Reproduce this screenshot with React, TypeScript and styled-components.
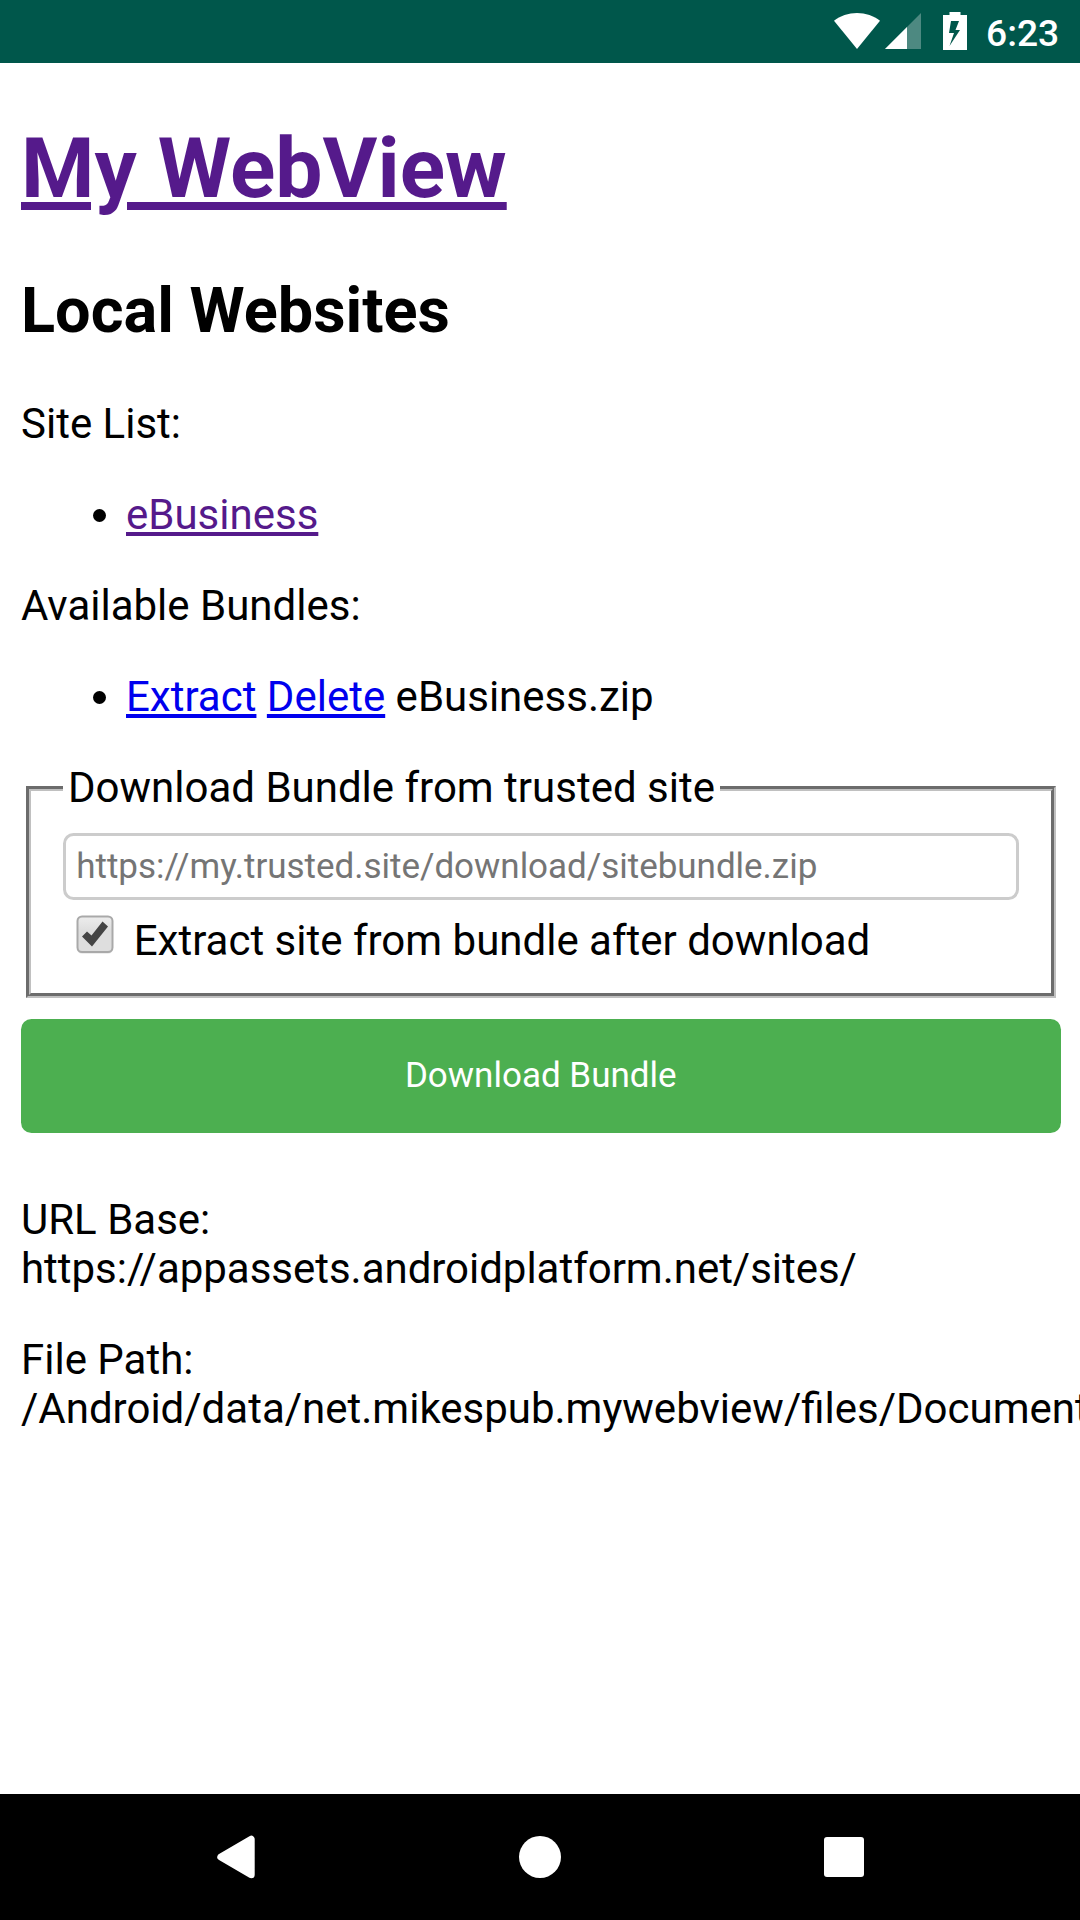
import React from "react";
import styled, { createGlobalStyle } from "styled-components";

const GlobalStyle = createGlobalStyle`
  html, body { margin: 0; padding: 0; }
  body {
    background: #fff;
    color: #000;
    font-family: Roboto, sans-serif;
    overflow: hidden;
  }
`;

const Screen = styled.div`
  display: flex;
  flex-direction: column;
  width: 1080px;
  height: 1920px;
  overflow: hidden;
  background: #fff;
`;

const StatusBar = styled.header`
  box-sizing: border-box;
  flex: none;
  display: flex;
  justify-content: flex-end;
  align-items: center;
  height: 63px;
  padding-right: 21px;
  background: #00574b;
`;

const StatusIcons = styled.svg`
  display: block;
  width: 140px;
  height: 63px;
  margin-right: 15px;
`;

const Clock = styled.span`
  width: 73px;
  color: #fff;
  font-size: 37.2px;
  font-weight: 500;
  line-height: 44px;
  padding-top: 2px;
`;

const WebPage = styled.main`
  box-sizing: border-box;
  flex: 1;
  display: flex;
  flex-direction: column;
  width: 1081.5px;
  padding: 57.28px 21px 0;
  font-size: 42px;
  line-height: 49px;
`;

const Title = styled.h1`
  margin: 0 0 55.28px;
  font-size: 84px;
  line-height: 98px;
  font-weight: 700;
`;

const Heading = styled.h2`
  margin: 0 0 51.3px;
  font-size: 63px;
  line-height: 74px;
  font-weight: 700;
`;

const Link = styled.a<{ $visited?: boolean; $large?: boolean }>`
  color: ${(p) => (p.$visited ? "#551a8b" : "#0000ee")};
  text-decoration: underline;
  text-decoration-thickness: ${(p) => (p.$large ? 8 : 4)}px;
  text-underline-offset: ${(p) => (p.$large ? 5 : 3)}px;
`;

const Paragraph = styled.p`
  margin: 0 0 42px;
  white-space: nowrap;
`;

const Url = styled.span`
  letter-spacing: -0.025px;
`;

const SiteList = styled.ul<{ $last?: boolean }>`
  margin: 0 0 ${(p) => (p.$last ? 43 : 42)}px;
  padding: 0 0 0 105px;
`;

const BundleFieldset = styled.fieldset`
  box-sizing: border-box;
  height: 234px;
  margin: 0 4.5px 21px 5.25px;
  padding: 14.7px 32.25px 0 31.5px;
  border: 5px groove #c0c0c0;
`;

const Legend = styled.legend`
  padding: 0 5.25px 2px;
  line-height: 47px;
`;

const UrlInput = styled.input`
  box-sizing: border-box;
  display: block;
  width: 100%;
  height: 67px;
  margin: 5px 0 0;
  padding: 0 10.5px;
  border: 3px solid #ccc;
  border-radius: 10.5px;
  background: #fff;
  font: 35px Roboto, sans-serif;
  letter-spacing: -0.025px;
  outline: none;
  &::placeholder { color: #757575; opacity: 1; }
`;

const CheckRow = styled.label`
  display: flex;
  align-items: flex-start;
  padding: 16px 0 0 13px;
`;

const CheckIcon = styled.svg`
  flex: none;
  width: 38px;
  height: 40px;
  margin: -1px 20px 0 0;
`;

const DownloadButton = styled.button`
  flex: none;
  height: 114px;
  margin: 0 0 62px;
  padding: 0;
  border: 0;
  border-radius: 10.5px;
  background: #4caf50;
  color: #fff;
  font: 35px Roboto, sans-serif;
`;

const NavBar = styled.nav`
  flex: none;
  display: flex;
  justify-content: center;
  align-items: center;
  height: 126px;
  background: #000;
`;

const NavButton = styled.button`
  display: flex;
  align-items: center;
  justify-content: center;
  width: 304px;
  height: 126px;
  padding: 0;
  border: 0;
  background: none;
`;

const NavIcon = styled.svg`
  width: 60px;
  height: 60px;
  fill: #fff;
`;

export default function App() {
  return (
    <Screen>
      <GlobalStyle />
      <StatusBar>
        <StatusIcons viewBox="831 0 140 63" fill="#fff">
          <path d="M834 20.8C840 16 848.5 13 857 13C865.500 13 874 16 880 20.800L857 49Z" />
          <path d="M921 13V49H885Z" opacity=".3" />
          <path d="M907 27V49H885Z" />
          <path fillRule="evenodd" d="M949.500 12H960.500V15H967V50H943V15H949.500ZM951 21L949 33H954L949.500 46L960 30H955.500L959 21Z" />
        </StatusIcons>
        <Clock>6:23</Clock>
      </StatusBar>
      <WebPage>
        <Title><Link $visited $large>My WebView</Link></Title>
        <Heading>Local Websites</Heading>
        <Paragraph>Site List:</Paragraph>
        <SiteList>
          <li><Link $visited>eBusiness</Link></li>
        </SiteList>
        <Paragraph>Available Bundles:</Paragraph>
        <SiteList $last>
          <li><Link>Extract</Link> <Link>Delete</Link> eBusiness.zip</li>
        </SiteList>
        <BundleFieldset>
          <Legend>Download Bundle from trusted site</Legend>
          <UrlInput placeholder="https://my.trusted.site/download/sitebundle.zip" />
          <CheckRow>
            <CheckIcon viewBox="0 0 38 40">
              <defs>
                <linearGradient id="boxFill" x1="0" y1="0" x2="0" y2="1">
                  <stop offset="0" stopColor="#ededed" />
                  <stop offset=".4" stopColor="#dedede" />
                  <stop offset="1" stopColor="#dedede" />
                </linearGradient>
              </defs>
              <rect x="1" y="3" width="36" height="36" rx="5" fill="#000" opacity=".07" />
              <rect x="1.500" y="1.500" width="35" height="35.500" rx="4.500" fill="url(#boxFill)" stroke="#a9a9a9" strokeWidth="2" />
              <path d="M6 21.500L11 16.500L15.500 20.500L26.500 6.500L32 11.500L16 31.500Z" fill="#444" />
            </CheckIcon>
            Extract site from bundle after download
          </CheckRow>
        </BundleFieldset>
        <DownloadButton>Download Bundle</DownloadButton>
        <Paragraph>URL Base:<br /><Url>https://appassets.androidplatform.net/sites/</Url></Paragraph>
        <Paragraph>File Path:<br />/Android/data/net.mikespub.mywebview/files/Documents</Paragraph>
      </WebPage>
      <NavBar>
        <NavButton aria-label="Back">
          <NavIcon viewBox="206 1827 60 60">
            <path d="M220.800 1857L251.200 1839.200V1874.800Z" stroke="#fff" strokeWidth="7" strokeLinejoin="round" />
          </NavIcon>
        </NavButton>
        <NavButton aria-label="Home">
          <NavIcon viewBox="510 1827 60 60"><circle cx="540" cy="1857" r="21" /></NavIcon>
        </NavButton>
        <NavButton aria-label="Recents">
          <NavIcon viewBox="814 1827 60 60"><rect x="824" y="1837" width="40" height="40" rx="3" /></NavIcon>
        </NavButton>
      </NavBar>
    </Screen>
  );
}
